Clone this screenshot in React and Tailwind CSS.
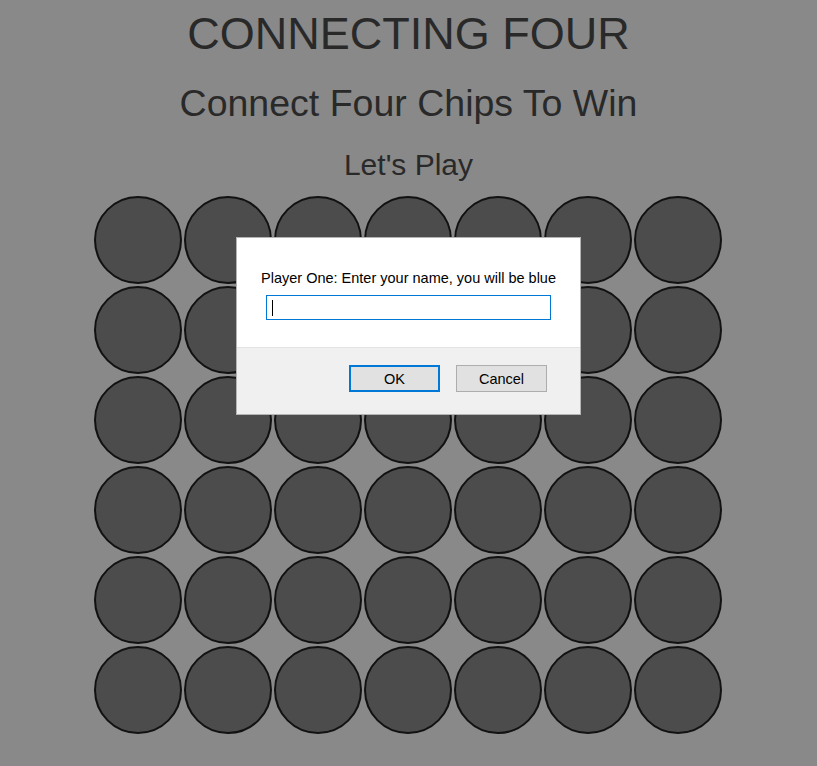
import React from 'react';

const ROWS = 6;
const COLS = 7;

const Board = () => {
  const cells = Array.from({ length: ROWS * COLS });
  return (
    <div className="ml-[94px] grid w-[628px] grid-cols-7 gap-[2px]">
      {cells.map((_, i) => (
        <div
          key={i}
          className="h-[88px] w-[88px] rounded-full border-2 border-[#111111] bg-[#4c4c4c]"
        />
      ))}
    </div>
  );
};

const PromptDialog = () => (
  <div className="absolute left-[236px] top-[237px] w-[345px] border border-[#b4b4b4] bg-white font-['Liberation_Sans',Arial,sans-serif] text-[14.5px] text-black">
    <div className="h-[109px] px-[20px] pt-[32px]">
      <p className="text-center leading-[16px]">Player One: Enter your name, you will be blue</p>
      <div className="mx-auto mt-[9px] flex h-[25px] w-[285px] items-center border border-[#0078d7] bg-white pl-[5px]">
        <span className="h-[16px] w-px bg-black" />
      </div>
    </div>
    <div className="flex h-[67px] justify-end gap-4 border-t border-[#e3e3e3] bg-[#f0f0f0] pr-[33px] pt-[17px]">
      <button className="h-[27px] w-[91px] border-2 border-[#0078d7] bg-[#e1e1e1] pt-px text-[14.5px] leading-none text-black">
        OK
      </button>
      <button className="h-[27px] w-[91px] border border-[#adadad] bg-[#e1e1e1] pt-px text-[14.5px] leading-none text-black">
        Cancel
      </button>
    </div>
  </div>
);

export default function App() {
  return (
    <div className="relative min-h-[766px] bg-[#898989] font-['Liberation_Sans',Arial,sans-serif] text-[#292929]">
      <div className="flex flex-col items-center">
        <h1 className="mt-[11px] text-[45px] leading-none">CONNECTING FOUR</h1>
        <h2 className="mt-[29px] text-[37.5px] leading-none">Connect Four Chips To Win</h2>
        <h3 className="mt-[27px] text-[30px] leading-none">Let's Play</h3>
      </div>
      <div className="mt-[16px]">
        <Board />
      </div>
      <PromptDialog />
    </div>
  );
}
